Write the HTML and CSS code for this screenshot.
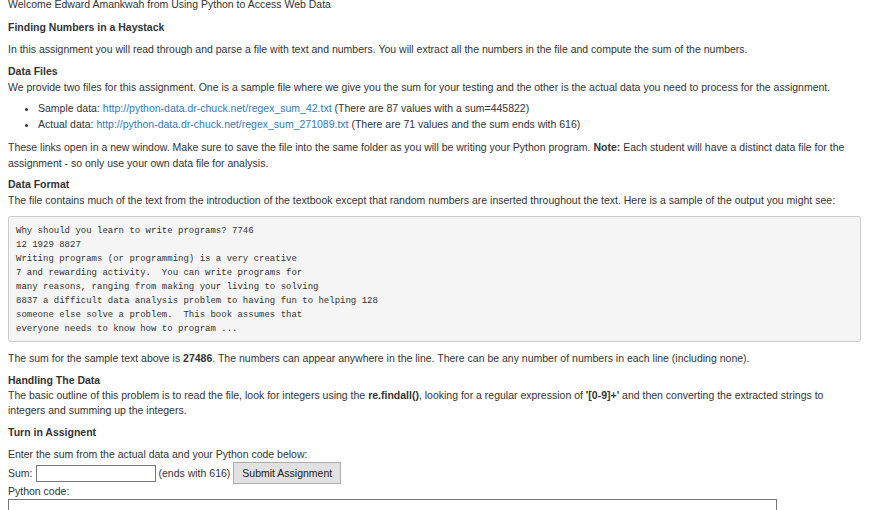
FILE: index.html
```html
<!DOCTYPE html>
<html>
<head>
<meta charset="utf-8">
<link rel="stylesheet" href="styles.css">
</head>
<body>
<div class="welcome">Welcome Edward Amankwah from Using Python to Access Web Data</div>
<h4 class="title">Finding Numbers in a Haystack</h4>
<p class="intro">In this assignment you will read through and parse a file with text and numbers. You will extract all the numbers in the file and compute the sum of the numbers.</p>
<h5 class="sub">Data Files</h5>
<p>We provide two files for this assignment. One is a sample file where we give you the sum for your testing and the other is the actual data you need to process for the assignment.</p>
<ul class="files">
<li>Sample data: <a href="#">http://python-data.dr-chuck.net/regex_sum_42.txt</a> (There are 87 values with a sum=445822)</li>
<li>Actual data: <a href="#">http://python-data.dr-chuck.net/regex_sum_271089.txt</a> (There are 71 values and the sum ends with 616)</li>
</ul>
<p class="links">These links open in a new window. Make sure to save the file into the same folder as you will be writing your Python program. <b>Note:</b> Each student will have a distinct data file for the assignment - so only use your own data file for analysis.</p>
<h5 class="sub">Data Format</h5>
<p>The file contains much of the text from the introduction of the textbook except that random numbers are inserted throughout the text. Here is a sample of the output you might see:</p>
<pre class="sample">Why should you learn to write programs? 7746
12 1929 8827
Writing programs (or programming) is a very creative
7 and rewarding activity.  You can write programs for
many reasons, ranging from making your living to solving
8837 a difficult data analysis problem to having fun to helping 128
someone else solve a problem.  This book assumes that
everyone needs to know how to program ...</pre>
<p class="after">The sum for the sample text above is <b>27486</b>. The numbers can appear anywhere in the line. There can be any number of numbers in each line (including none).</p>
<h5 class="sub">Handling The Data</h5>
<p class="outline">The basic outline of this problem is to read the file, look for integers using the <b>re.findall()</b>, looking for a regular expression of <b>'[0-9]+'</b> and then converting the extracted strings to integers and summing up the integers.</p>
<h4 class="title turnin">Turn in Assignent</h4>
<form class="submit">
<div class="line">Enter the sum from the actual data and your Python code below:</div>
<div class="sumrow">Sum: <input type="text" class="sum"> (ends with 616) <button type="button" class="btn">Submit Assignment</button></div>
<div class="code-label">Python code:</div>
<textarea class="code"></textarea>
</form>
</body>
</html>
```

FILE: styles.css
```css
html, body {
  background: #fff;
}
body {
  margin: 0 8px;
  font-family: "Liberation Sans", Arial, sans-serif;
  font-size: 10.5px;
  line-height: 16px;
  color: #333;
}
.welcome {
  margin-top: -4px;
}
.title {
  font-size: 10.5px;
  font-weight: bold;
  margin: 7px 0 6px;
  line-height: 16px;
}
p {
  margin: 0;
}
.intro {
  margin-bottom: 7px;
}
.sub {
  font-size: 10.5px;
  font-weight: bold;
  margin: 0;
  line-height: 15px;
}
.files {
  margin: 5px 0 7px;
  padding-left: 30px;
}
.files li {
  line-height: 16px;
}
a {
  color: #337ab7;
  text-decoration: none;
}
.links {
  margin-bottom: 6px;
}
.sample {
  margin: 8px 0 8px;
  padding: 7px 7px 5px;
  background: #f5f5f5;
  border: 1px solid #ccc;
  border-radius: 3px;
  font-family: "Liberation Mono", "DejaVu Sans Mono", monospace;
  font-size: 9px;
  line-height: 14px;
  color: #333;
}
.after {
  margin-bottom: 7px;
}
.outline {
  line-height: 15px;
}
.turnin {
  margin-top: 6px;
}
.submit .line {
  line-height: 16px;
}
.sumrow {
  height: 22px;
  display: flex;
  align-items: center;
  gap: 3px;
}
.sum {
  width: 116px;
  height: 15px;
  padding: 0 1px;
  border: 1px solid #767676;
  font: inherit;
  margin: 0;
}
.btn {
  height: 22px;
  padding: 0 8px;
  border: 1px solid #adadad;
  background: #e1e1e1;
  font-family: "Liberation Sans", Arial, sans-serif;
  font-size: 10.5px;
  color: #222;
  margin: 0;
}
.code-label {
  line-height: 14px;
}
.code {
  display: block;
  width: 767px;
  height: 60px;
  margin: 1px 0 0;
  border: 1px solid #767676;
  padding: 0;
}
```
